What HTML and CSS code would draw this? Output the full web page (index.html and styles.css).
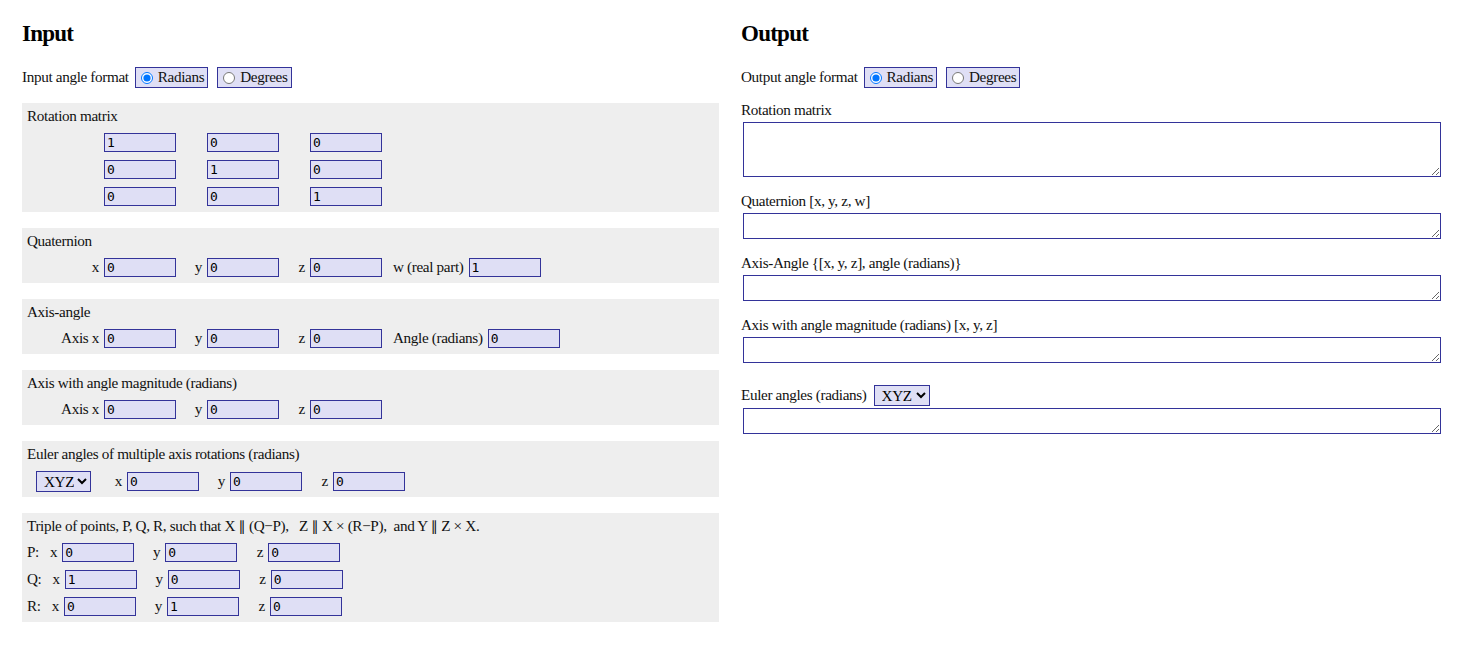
FILE: index.html
```html
<!DOCTYPE html>
<html>
<head>
<meta charset="utf-8">
<title>Rotation converter</title>
<link rel="stylesheet" href="styles.css">
</head>
<body>
<div class="page">
  <section class="col col-in">
    <h2>Input</h2>
    <div class="fmt">
      <span class="ftxt">Input angle format</span>
      <label class="opt"><input type="radio" name="inf" checked><span class="ftxt">Radians</span></label>
      <label class="opt opt2"><input type="radio" name="inf"><span class="ftxt">Degrees</span></label>
    </div>

    <div class="panel">
      <div class="ptitle">Rotation matrix</div>
      <div class="rows">
        <div class="row"><span class="lab first"></span><input class="num" value="1"><span class="lab"></span><input class="num" value="0"><span class="lab"></span><input class="num" value="0"></div>
        <div class="row"><span class="lab first"></span><input class="num" value="0"><span class="lab"></span><input class="num" value="1"><span class="lab"></span><input class="num" value="0"></div>
        <div class="row"><span class="lab first"></span><input class="num" value="0"><span class="lab"></span><input class="num" value="0"><span class="lab"></span><input class="num" value="1"></div>
      </div>
    </div>

    <div class="panel">
      <div class="ptitle">Quaternion</div>
      <div class="rows">
        <div class="row"><span class="lab first">x</span><input class="num" value="0"><span class="lab">y</span><input class="num" value="0"><span class="lab">z</span><input class="num" value="0"><span class="lab">w (real part)</span><input class="num" value="1"></div>
      </div>
    </div>

    <div class="panel">
      <div class="ptitle">Axis-angle</div>
      <div class="rows">
        <div class="row"><span class="lab first">Axis x</span><input class="num" value="0"><span class="lab">y</span><input class="num" value="0"><span class="lab">z</span><input class="num" value="0"><span class="lab">Angle (radians)</span><input class="num" value="0"></div>
      </div>
    </div>

    <div class="panel">
      <div class="ptitle">Axis with angle magnitude (radians)</div>
      <div class="rows">
        <div class="row"><span class="lab first">Axis x</span><input class="num" value="0"><span class="lab">y</span><input class="num" value="0"><span class="lab">z</span><input class="num" value="0"></div>
      </div>
    </div>

    <div class="panel panel-euler">
      <div class="ptitle">Euler angles of multiple axis rotations (radians)</div>
      <div class="rows">
        <div class="row"><select class="sel sel-in"><option>XYZ</option><option>XZY</option><option>YXZ</option><option>YZX</option><option>ZXY</option><option>ZYX</option></select><span class="lab wide">x</span><input class="num" value="0"><span class="lab">y</span><input class="num" value="0"><span class="lab">z</span><input class="num" value="0"></div>
      </div>
    </div>

    <div class="panel">
      <div class="ptitle">Triple of points, P, Q, R, such that X <span class="par">∥</span> (Q−P), &nbsp; Z <span class="par">∥</span> X × (R−P), &nbsp;and Y <span class="par">∥</span> Z × X.</div>
      <div class="rows">
        <div class="row"><span class="lab tight pt">P:</span><span class="lab tight">x</span><input class="num" value="0"><span class="lab">y</span><input class="num" value="0"><span class="lab">z</span><input class="num" value="0"></div>
        <div class="row"><span class="lab tight pt">Q:</span><span class="lab tight">x</span><input class="num" value="1"><span class="lab">y</span><input class="num" value="0"><span class="lab">z</span><input class="num" value="0"></div>
        <div class="row"><span class="lab tight pt">R:</span><span class="lab tight">x</span><input class="num" value="0"><span class="lab">y</span><input class="num" value="1"><span class="lab">z</span><input class="num" value="0"></div>
      </div>
    </div>
  </section>

  <section class="col col-out">
    <h2>Output</h2>
    <div class="fmt">
      <span class="ftxt">Output angle format</span>
      <label class="opt"><input type="radio" name="outf" checked><span class="ftxt">Radians</span></label>
      <label class="opt opt2"><input type="radio" name="outf"><span class="ftxt">Degrees</span></label>
    </div>

    <div class="out out-first">
      <div class="olab">Rotation matrix</div>
      <textarea class="ta ta-big"></textarea>
    </div>
    <div class="out">
      <div class="olab">Quaternion [x, y, z, w]</div>
      <textarea class="ta"></textarea>
    </div>
    <div class="out">
      <div class="olab">Axis-Angle {[x, y, z], angle (radians)}</div>
      <textarea class="ta"></textarea>
    </div>
    <div class="out">
      <div class="olab">Axis with angle magnitude (radians) [x, y, z]</div>
      <textarea class="ta"></textarea>
    </div>
    <div class="out out-euler">
      <div class="olab olab-sel"><span class="ftxt">Euler angles (radians)</span><select class="sel sel-out"><option>XYZ</option><option>XZY</option><option>YXZ</option><option>YZX</option><option>ZXY</option><option>ZYX</option></select></div>
      <textarea class="ta"></textarea>
    </div>
  </section>
</div>
</body>
</html>
```

FILE: styles.css
```css
html, body {
  margin: 0;
  padding: 0;
  background: #ffffff;
}

body {
  font-family: "Liberation Serif", "Times New Roman", serif;
  font-size: 15.2px;
  letter-spacing: -0.35px;
  color: #111111;
}

.page {
  display: flex;
  gap: 22px;
  padding: 21px 19px 0 22px;
}

.col-in {
  width: 697px;
  flex: none;
}

.col-out {
  width: 700px;
  flex: none;
}

h2 {
  margin: 0;
  font-size: 23px;
  letter-spacing: -0.75px;
  line-height: 25px;
  font-weight: bold;
  color: #000000;
}

.fmt {
  display: flex;
  align-items: center;
  height: 21px;
  margin-top: 21px;
  white-space: nowrap;
}

.ftxt {
  line-height: 16px;
  padding-bottom: 2px;
}

.opt {
  display: inline-flex;
  align-items: center;
  height: 21px;
  box-sizing: border-box;
  border: 1px solid #333399;
  background: #dfdff5;
  padding: 0 3px 0 0;
  margin-left: 6px;
}

.opt2 {
  margin-left: 9px;
}

.opt input {
  width: 12px;
  height: 12px;
  margin: 0 5px 0 5px;
}

.panel {
  background: #eeeeee;
  padding: 4px 5px 6px 5px;
  margin-top: 16px;
}

.fmt + .panel {
  margin-top: 15px;
}

.panel-euler {
  padding-bottom: 5px;
}

.ptitle {
  height: 18px;
  line-height: 18px;
  white-space: nowrap;
}

.par {
  font-family: "DejaVu Sans", sans-serif;
  font-size: 14px;
  line-height: 0;
  letter-spacing: 0;
  color: #111111;
}

.rows {
  display: flex;
  flex-direction: column;
  gap: 8px;
  margin-top: 8px;
}

.row {
  display: flex;
  align-items: center;
  height: 19px;
  white-space: nowrap;
}

.panel-euler .row {
  height: 21px;
}

.lab {
  box-sizing: border-box;
  min-width: 31px;
  line-height: 16px;
  padding: 0 5px 2px 11px;
  text-align: right;
  white-space: nowrap;
}

.lab.first {
  width: 77px;
  min-width: 77px;
  padding-left: 0;
}

.lab.wide {
  min-width: 36px;
}

.lab.tight {
  min-width: 0;
}

.lab.pt {
  padding: 0 0 2px 0;
}

.num {
  box-sizing: border-box;
  width: 72px;
  height: 19px;
  margin: 0;
  padding: 0 2px;
  border: 1px solid #333399;
  background: #dfdff5;
  font-family: "DejaVu Sans Mono", "Liberation Mono", monospace;
  font-size: 13px;
  letter-spacing: -0.5px;
  color: #000000;
  border-radius: 0;
  outline: none;
}

.sel {
  box-sizing: border-box;
  height: 21px;
  margin: 0;
  padding: 0 0 0 3px;
  border: 1px solid #333399;
  background-color: #dfdff5;
  font-family: "Liberation Serif", "Times New Roman", serif;
  font-size: 15.2px;
  letter-spacing: -0.35px;
  color: #000000;
  border-radius: 0;
}

.sel-in {
  width: 55px;
  margin-left: 9px;
}

.sel-out {
  width: 56px;
  margin-left: 7px;
}

.out {
  margin-top: 14px;
}

.out-first {
  margin-top: 12px;
}

.out-euler {
  margin-top: 22px;
}

.olab {
  line-height: 20px;
  white-space: nowrap;
}

.olab-sel {
  display: flex;
  align-items: center;
  height: 21px;
}

.ta {
  display: block;
  box-sizing: border-box;
  width: 698px;
  height: 26px;
  margin: 2px 0 0 2px;
  padding: 2px;
  border: 1px solid #333399;
  background: #ffffff;
  border-radius: 0;
  font-family: "DejaVu Sans Mono", monospace;
  font-size: 12px;
  letter-spacing: 0;
}

.ta-big {
  height: 55px;
}
```
